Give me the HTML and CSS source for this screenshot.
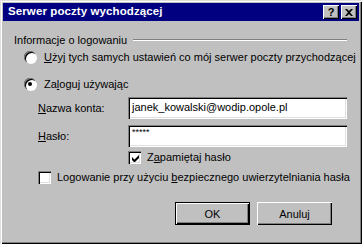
FILE: index.html
```html
<!DOCTYPE html>
<html lang="pl">
<head>
    <meta charset="UTF-8">
    <title>Serwer poczty wychodzącej</title>
    <link rel="stylesheet" href="styles.css">
</head>
<body>
    <div class="window">
        <!-- pasek tytułu -->
        <div class="titlebar">
            <span class="title">Serwer poczty wychodzącej</span>
            <div class="title-buttons">
                <span class="tbtn">?</span>
                <span class="tbtn close">
                    <svg width="8" height="7" viewBox="0 0 8 7"><path d="M0 0h2l2 2 2-2h2L5 3.5 8 7H6L4 5 2 7H0l3-3.5z" fill="#000"/></svg>
                </span>
            </div>
        </div>

        <div class="body">
            <div class="group-head">
                <span>Informacje o logowaniu</span>
                <span class="etch"></span>
            </div>

            <div class="option first">
                <span class="radio"></span>
                <span><u>U</u>żyj tych samych ustawień co mój serwer poczty przychodzącej</span>
            </div>
            <div class="option">
                <span class="radio checked"></span>
                <span>Za<u>l</u>oguj używając</span>
            </div>

            <div class="fields">
                <label><u>N</u>azwa konta:</label>
                <div class="edit">janek_kowalski@wodip.opole.pl</div>
                <label><u>H</u>asło:</label>
                <div class="edit pass">*****</div>
                <span></span>
                <div class="check-row">
                    <span class="check checked">
                        <svg width="7" height="7" viewBox="0 0 7 7"><path d="M0 2v3l2 2h1l4-4V0L2.5 4.5z" fill="#000"/></svg>
                    </span>
                    <span>Z<u>a</u>pamiętaj hasło</span>
                </div>
            </div>

            <div class="check-row secure">
                <span class="check"></span>
                <span>Logowanie przy użyciu <u>b</u>ezpiecznego uwierzytelniania hasła</span>
            </div>

            <div class="buttons">
                <button class="btn default">OK</button>
                <button class="btn">Anuluj</button>
            </div>
        </div>
    </div>
</body>
</html>
```

FILE: styles.css
```css
/* ========== podstawy ========== */
:root {
    --face: #c0c0c0;
    --shadow: #808080;
    --dark: #000;
    --light: #dfdfdf;
    --hi: #fff;
    --navy: #000080;
}

* {
    margin: 0;
    padding: 0;
    box-sizing: border-box;
}

body {
    background: var(--face);
    font: 11px/1 "Liberation Sans", Arial, sans-serif;
    color: #000;
    white-space: nowrap;
}

u {
    text-decoration: underline;
    text-underline-offset: 1px;
}

/* ========== okno ========== */
.window {
    width: 362px;
    height: 244px;
    background: var(--face);
    padding: 3px;
    box-shadow:
        inset 1px 1px 0 var(--light),
        inset 2px 2px 0 var(--hi),
        inset -1px -1px 0 var(--dark),
        inset -2px -2px 0 var(--shadow);
}

.titlebar {
    height: 18px;
    background: var(--navy);
    display: flex;
    align-items: center;
    justify-content: space-between;
    padding: 0 2px 0 5px;
}

.title {
    color: #fff;
    font-weight: bold;
    font-size: 11.5px;
    letter-spacing: 0.1px;
}

.title-buttons {
    display: flex;
    gap: 2px;
}

.tbtn {
    width: 16px;
    height: 14px;
    background: var(--face);
    display: flex;
    align-items: center;
    justify-content: center;
    font-weight: bold;
    font-size: 11px;
    box-shadow:
        inset 1px 1px 0 var(--hi),
        inset -1px -1px 0 var(--dark),
        inset -2px -2px 0 var(--shadow);
}

/* ========== treść ========== */
.body {
    padding: 12px 12px 0 11px;
}

.group-head {
    display: flex;
    align-items: center;
    gap: 6px;
    height: 14px;
}

.etch {
    flex: 1;
    height: 2px;
    border-top: 1px solid var(--shadow);
    border-bottom: 1px solid var(--hi);
}

.option {
    display: flex;
    align-items: center;
    gap: 8px;
    margin: 13px 0 0 10px;
    height: 14px;
}

.option.first {
    margin-top: 3px;
}

.radio {
    flex-shrink: 0;
    width: 12px;
    height: 12px;
    border-radius: 50%;
    background: #fff;
    position: relative;
    box-shadow:
        inset 1px 1px 0 var(--shadow),
        inset 2px 2px 0 var(--dark),
        1px 1px 0 var(--hi);
}

.radio.checked::after {
    content: "";
    position: absolute;
    left: 4px;
    top: 4px;
    width: 4px;
    height: 4px;
    border-radius: 50%;
    background: #000;
}

.fields {
    display: grid;
    grid-template-columns: 90px 219px;
    align-items: center;
    row-gap: 6px;
    margin: 6px 0 0 24px;
}

.edit {
    height: 22px;
    background: #fff;
    padding: 5px 4px 0;
    box-shadow:
        inset 1px 1px 0 var(--shadow),
        inset 2px 2px 0 var(--dark),
        inset -1px -1px 0 var(--hi),
        inset -2px -2px 0 var(--light);
}

.edit.pass {
    font-size: 9px;
    padding-top: 3px;
}

.check-row {
    display: flex;
    align-items: center;
    gap: 6px;
    height: 13px;
}

.fields .check-row {
    margin-top: -2px;
}

.check {
    flex-shrink: 0;
    width: 13px;
    height: 13px;
    background: #fff;
    display: flex;
    align-items: center;
    justify-content: center;
    box-shadow:
        inset 1px 1px 0 var(--shadow),
        inset 2px 2px 0 var(--dark),
        inset -1px -1px 0 var(--hi),
        inset -2px -2px 0 var(--light);
}

.check svg {
    margin: 1px 0 0 1px;
}

.secure {
    margin: 7px 0 0 24px;
}

.buttons {
    display: flex;
    justify-content: flex-end;
    gap: 7px;
    margin: 18px 15px 0 0;
}

.btn {
    width: 75px;
    height: 23px;
    background: var(--face);
    border: none;
    font: 11px "Liberation Sans", Arial, sans-serif;
    box-shadow:
        inset 1px 1px 0 var(--hi),
        inset -1px -1px 0 var(--dark),
        inset -2px -2px 0 var(--shadow);
}

.btn.default {
    box-shadow:
        inset 0 0 0 1px var(--dark),
        inset 2px 2px 0 var(--hi),
        inset -2px -2px 0 var(--dark),
        inset -3px -3px 0 var(--shadow);
}
```
